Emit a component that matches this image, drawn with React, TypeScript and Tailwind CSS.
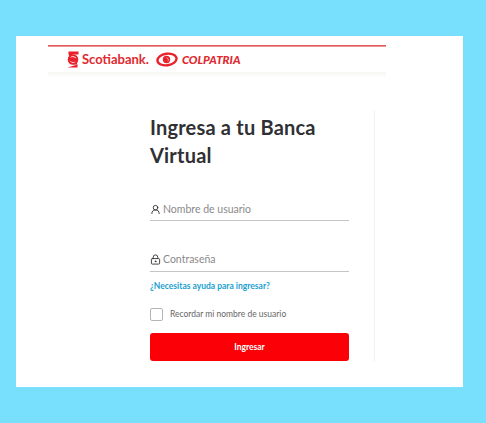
import { LockKeyhole, UserRound } from "lucide-react";

function ScotiaMark() {
  return (
    <svg width="12" height="17" viewBox="0 0 12 17" className="shrink-0">
      <path d="M1.5 .5H11.500V3.500H5.500L2.500 5.500 1.500 3.500z" fill="#e8212b" />
      <path d="M.5 16.500H10.500V13.500H6.500L9.500 11.500 10.500 13.500z" fill="#e8212b" />
      <circle cx="6" cy="8.500" r="5.300" fill="#e8212b" />
      <path d="M3 6.500A4 4 0 0 1 9.500 7.500 6 6 0 0 0 3 6.500z" fill="#fff" />
      <path d="M9 10.500A4 4 0 0 1 2.500 9.500 6 6 0 0 0 9 10.500z" fill="#fff" />
    </svg>
  );
}

function ColpatriaMark() {
  return (
    <svg width="22" height="15" viewBox="0 0 22 15" className="shrink-0">
      <ellipse cx="11" cy="7.500" rx="9.600" ry="5.800" fill="none" stroke="#e8212b" strokeWidth="2.400" transform="rotate(-8 11 7.500)" />
      <circle cx="10.500" cy="7.500" r="3.700" fill="#e8212b" />
      <path d="M10 5.500a2.300 2.300 0 0 1 1.500 4.200 3 3 0 0 0-1.500-4.200z" fill="#fff" />
    </svg>
  );
}

export default function App() {
  return (
    <div className="h-[423px] w-[486px] overflow-hidden bg-[#78dffd] pl-[16px] pt-[36px] font-['Lato',sans-serif]">
      <div className="h-[351px] w-[447px] bg-white pl-[32px] pt-[9px]">
        <div className="w-[338px]">
          <div className="h-[2px] bg-gradient-to-b from-[#d8343a] to-[#f0b0b2]" />
          <div className="flex h-[25px] items-center pl-[19px]">
            <div className="flex items-center gap-[3px]">
              <ScotiaMark />
              <span className="text-[13px] font-bold leading-none text-[#e02a31]">Scotiabank.</span>
            </div>
            <div className="ml-[7px] flex items-center gap-[4px]">
              <ColpatriaMark />
              <span className="text-[11.5px] font-black italic leading-none text-[#e02a31]">COLPATRIA</span>
            </div>
          </div>
          <div className="h-[6px] bg-gradient-to-b from-[#f6f6f4] to-white" />
          <div className="ml-[102px] mt-[32px] flex">
            <div className="w-[199px]">
              <h1 className="mt-[3px] text-[20px] font-bold leading-[28px] tracking-[0.2px] text-[#2f3033]">
                Ingresa a tu Banca Virtual
              </h1>
              <div className="mt-[31px] flex h-[21px] items-center gap-[2px] border-b border-[#c4c4c4] pb-px text-[10.5px] text-[#8a8a8a]">
                <UserRound size={11} strokeWidth={2} className="text-[#333]" />
                <span>Nombre de usuario</span>
              </div>
              <div className="mt-[30px] flex h-[21px] items-center gap-[2px] border-b border-[#c4c4c4] pb-[3px] text-[10.5px] text-[#8a8a8a]">
                <LockKeyhole size={11} strokeWidth={2} className="text-[#333]" />
                <span>Contraseña</span>
              </div>
              <a className="mt-[9px] block text-[8.5px] font-bold leading-[11px] text-[#1a9fd0]">
                ¿Necesitas ayuda para ingresar?
              </a>
              <label className="mt-[16px] flex h-[13px] items-center gap-[7px]">
                <span className="h-[13px] w-[13px] rounded-[2px] border border-[#b5b5b5] bg-white" />
                <span className="text-[8.5px] text-[#666]">Recordar mi nombre de usuario</span>
              </label>
              <button className="mt-[12px] flex h-[28px] w-full items-center justify-center rounded-[3px] bg-[#fb0007] text-[8.5px] font-bold text-white">
                Ingresar
              </button>
            </div>
            <div className="ml-[25px] h-[252px] w-px bg-[#f1f1f1]" />
          </div>
        </div>
      </div>
    </div>
  );
}
